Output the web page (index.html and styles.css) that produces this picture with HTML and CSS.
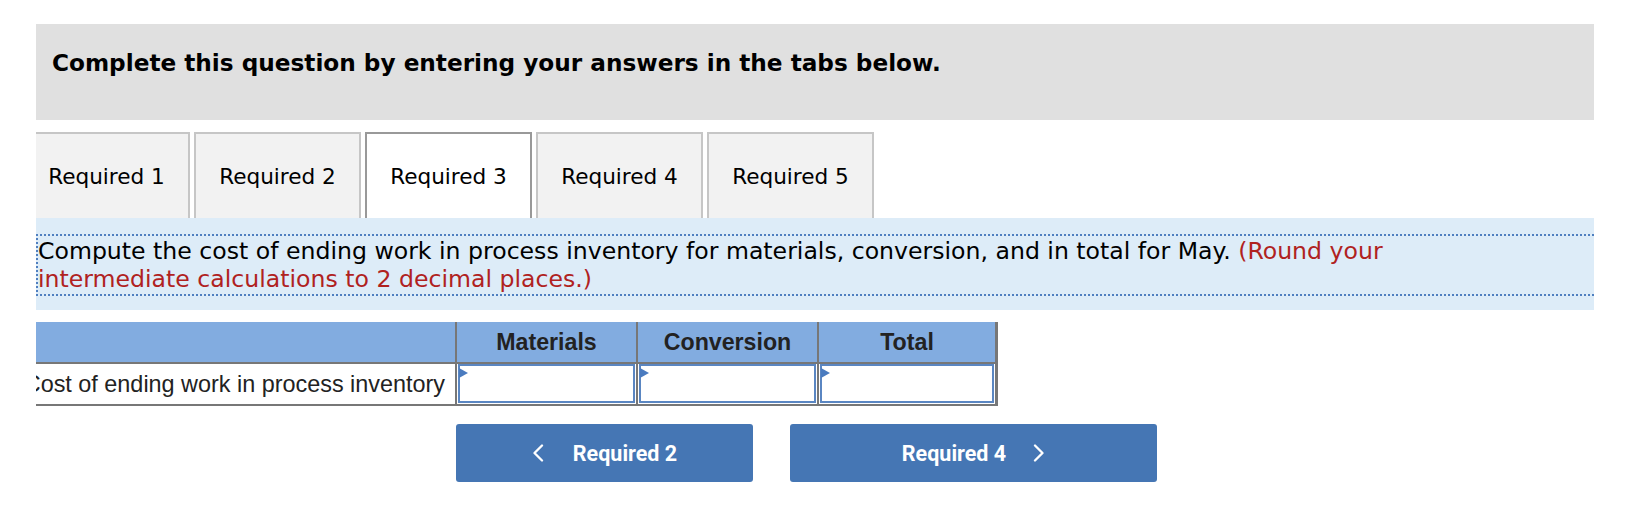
FILE: index.html
```html
<!DOCTYPE html>
<html>
<head>
<meta charset="utf-8">
<link rel="stylesheet" href="styles.css">
</head>
<body>
<div class="page">
  <div class="intro">Complete this question by entering your answers in the tabs below.</div>

  <div class="tabs">
    <div class="tab first">Required 1</div>
    <div class="tab">Required 2</div>
    <div class="tab active">Required 3</div>
    <div class="tab">Required 4</div>
    <div class="tab">Required 5</div>
  </div>

  <div class="panel">
    <div class="prompt">Compute the cost of ending work in process inventory for materials, conversion, and in total for May. <span class="hint">(Round your intermediate calculations to 2 decimal places.)</span></div>
  </div>

  <div class="grid">
    <div class="hcell label-head"></div>
    <div class="hcell">Materials</div>
    <div class="hcell">Conversion</div>
    <div class="hcell last">Total</div>

    <div class="rcell label"><span>Cost of ending work in process inventory</span></div>
    <div class="rcell"><div class="entry"></div></div>
    <div class="rcell"><div class="entry"></div></div>
    <div class="rcell last"><div class="entry"></div></div>
  </div>

  <div class="nav">
    <div class="btn prev">
      <svg class="chev" width="12" height="18" viewBox="0 0 12 18"><polyline points="10,1.5 2.5,9 10,16.5" fill="none" stroke="#fff" stroke-width="2.3" stroke-linecap="round" stroke-linejoin="round"/></svg>
      <span>Required 2</span>
    </div>
    <div class="btn next">
      <span>Required 4</span>
      <svg class="chev" width="12" height="18" viewBox="0 0 12 18"><polyline points="2,1.5 9.5,9 2,16.5" fill="none" stroke="#fff" stroke-width="2.3" stroke-linecap="round" stroke-linejoin="round"/></svg>
    </div>
  </div>
</div>
</body>
</html>
```

FILE: styles.css
```css
html, body {
  margin: 0;
  padding: 0;
  background: #fff;
}

.page {
  width: 1558px;
  margin-left: 36px;
  padding-top: 24px;
  font-family: "DejaVu Sans", Verdana, sans-serif;
  color: #000;
}

.intro {
  height: 96px;
  box-sizing: border-box;
  background: #e0e0e0;
  padding: 25px 0 0 16px;
  line-height: 28px;
  font-weight: bold;
  font-size: 23.2px;
}

.tabs {
  margin-top: 12px;
  height: 86px;
  display: flex;
  gap: 4px;
  overflow: hidden;
}

.tab {
  width: 167px;
  flex: none;
  box-sizing: border-box;
  border: 2px solid #c6c6c6;
  border-bottom: none;
  background: #f2f2f2;
  display: flex;
  align-items: center;
  justify-content: center;
  font-size: 21.6px;
  padding-top: 1px;
}

.tab.first {
  margin-left: -13px;
}

.tab.active {
  background: #fff;
  border-color: #999;
}

.panel {
  background: #ddecf8;
  height: 92px;
  box-sizing: border-box;
  padding-top: 16px;
}

.prompt {
  border-top: 2px dotted #4f7fc0;
  border-bottom: 2px dotted #4f7fc0;
  border-left: 2px dotted #4f7fc0;
  font-size: 23.6px;
  line-height: 28px;
  padding: 1px 120px 1px 0;
}

.hint {
  color: #b0221f;
}

.grid {
  margin-top: 12px;
  width: 962px;
  display: grid;
  grid-template-columns: 421px 181px 181px 179px;
  font-family: "Liberation Sans", Arial, sans-serif;
  color: #222;
}

.hcell {
  height: 42px;
  box-sizing: border-box;
  background: #82ace0;
  border-right: 2px solid #777;
  border-bottom: 2px solid #777;
  display: flex;
  align-items: center;
  justify-content: center;
  font-weight: bold;
  font-size: 23.2px;
}

.rcell {
  height: 42px;
  box-sizing: border-box;
  border-right: 2px solid #777;
  border-bottom: 2px solid #777;
  background: #fff;
  padding: 0 1px 1px 1px;
  display: flex;
}

.hcell.last, .rcell.last {
  border-right-width: 3px;
}

.rcell.label {
  padding: 0 10px 0 0;
  justify-content: flex-end;
  align-items: center;
  overflow: hidden;
  white-space: nowrap;
  font-size: 23.4px;
}

.rcell.label span {
  flex: none;
}

.entry {
  flex: 1;
  position: relative;
  border: 2px solid #5a86c2;
  background: #fff;
}

.entry::before {
  content: "";
  position: absolute;
  left: -1px;
  top: 2px;
  border-left: 9px solid #4a7bbf;
  border-top: 5px solid transparent;
  border-bottom: 5px solid transparent;
}

.nav {
  margin-top: 18px;
  margin-left: 420px;
  display: flex;
  gap: 37px;
  font-family: Roboto, "Liberation Sans", sans-serif;
}

.btn {
  height: 58px;
  background: #4576b4;
  border-radius: 3px;
  color: #fff;
  font-weight: bold;
  font-size: 21.5px;
  display: flex;
  align-items: center;
  justify-content: center;
  gap: 29px;
}

.btn.prev {
  width: 297px;
}

.btn.next {
  width: 367px;
  gap: 27px;
}

.chev {
  display: block;
}
```
